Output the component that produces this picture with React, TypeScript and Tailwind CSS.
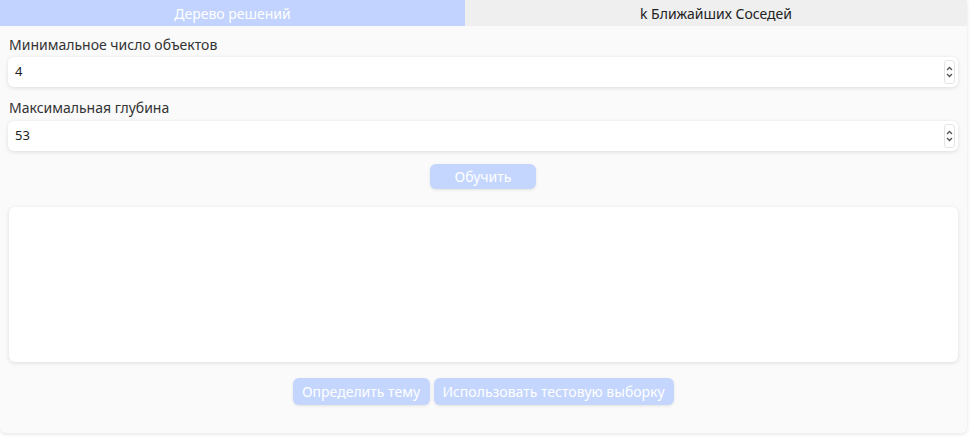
import React from "react";

function Spinner() {
  return (
    <div className="flex flex-col items-center justify-center w-[11px] h-[24px] rounded-[3px] border border-[#e4e4e4] bg-white">
      <svg width="7" height="5" viewBox="0 0 7 5" className="mb-[2px]">
        <path d="M1 4 L3.5 1.5 L6 4" fill="none" stroke="#555" strokeWidth="1.3" />
      </svg>
      <svg width="7" height="5" viewBox="0 0 7 5">
        <path d="M1 1 L3.5 3.5 L6 1" fill="none" stroke="#555" strokeWidth="1.3" />
      </svg>
    </div>
  );
}

function NumberField({ value }: { value: string }) {
  return (
    <div className="flex items-center h-[30px] bg-white rounded-[6px] shadow-[0_1px_4px_rgba(0,0,0,0.12)] pl-[7px] pr-[3px]">
      <span className="flex-1 text-[13px] text-[#222]">{value}</span>
      <Spinner />
    </div>
  );
}

export default function App() {
  return (
    <div className="w-[974px] h-[437px] bg-white" style={{ fontFamily: '"Noto Sans", "Open Sans", sans-serif' }}>
      <div className="w-[967px] h-[433px] bg-[#fafafa] rounded-b-[6px] shadow-[0_1px_4px_rgba(0,0,0,0.12)] flex flex-col">
        <div className="flex h-[26px] text-[14px]">
          <div className="w-[465px] bg-[#c1d3fe] text-white flex items-center justify-center">Дерево решений</div>
          <div className="flex-1 bg-[#efefef] text-[#222] flex items-center justify-center">k Ближайших Соседей</div>
        </div>
        <div className="flex flex-col pl-[8px] pr-[9px]">
          <div className="mt-[9px] h-[20px] leading-[20px] text-[14px] text-[#333] pl-[1px]">Минимальное число объектов</div>
          <div className="mt-[2px]"><NumberField value="4" /></div>
          <div className="mt-[11px] h-[20px] leading-[20px] text-[14px] text-[#333] pl-[1px]">Максимальная глубина</div>
          <div className="mt-[3px]"><NumberField value="53" /></div>
          <div className="mt-[13px] flex justify-center">
            <button className="w-[106px] h-[25px] rounded-[6px] bg-[#c4d6fe] text-white text-[14px] shadow-[0_1px_3px_rgba(0,0,0,0.1)]">Обучить</button>
          </div>
          <div className="mt-[18px] h-[155px] ml-[1px] bg-white rounded-[6px] shadow-[0_1px_4px_rgba(0,0,0,0.12)]" />
          <div className="mt-[16px] flex justify-center gap-[4px]">
            <button className="w-[137px] h-[27px] rounded-[6px] bg-[#c4d6fe] text-white text-[14px] shadow-[0_1px_3px_rgba(0,0,0,0.1)]">Определить тему</button>
            <button className="w-[240px] h-[27px] rounded-[6px] bg-[#c4d6fe] text-white text-[14px] shadow-[0_1px_3px_rgba(0,0,0,0.1)]">Использовать тестовую выборку</button>
          </div>
        </div>
      </div>
    </div>
  );
}
